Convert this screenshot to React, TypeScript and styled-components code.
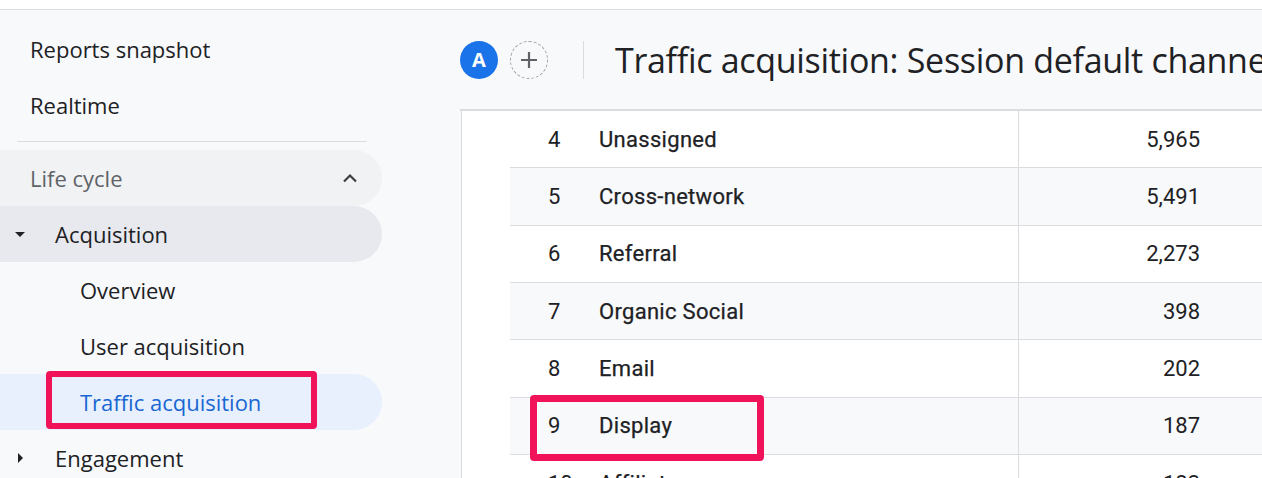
import styled, { createGlobalStyle } from 'styled-components'

const GlobalStyle = createGlobalStyle`
  html, body {
    margin: 0;
    padding: 0;
    background: #ffffff;
    overflow: hidden;
  }
  * {
    box-sizing: border-box;
  }
`

type NavItem = {
  label: string
  level: 0 | 1 | 2
  tone?: 'section' | 'open' | 'active'
  caret?: 'down' | 'right'
  chevron?: boolean
}

const navItems: NavItem[] = [
  { label: 'Life cycle', level: 0, tone: 'section', chevron: true },
  { label: 'Acquisition', level: 1, tone: 'open', caret: 'down' },
  { label: 'Overview', level: 2 },
  { label: 'User acquisition', level: 2 },
  { label: 'Traffic acquisition', level: 2, tone: 'active' },
  { label: 'Engagement', level: 1, caret: 'right' },
]

const rows = [
  { rank: 4, channel: 'Unassigned', value: '5,965' },
  { rank: 5, channel: 'Cross-network', value: '5,491' },
  { rank: 6, channel: 'Referral', value: '2,273' },
  { rank: 7, channel: 'Organic Social', value: '398' },
  { rank: 8, channel: 'Email', value: '202' },
  { rank: 9, channel: 'Display', value: '187', marked: true },
  { rank: 10, channel: 'Affiliates', value: '183' },
]

const App = () => {
  return (
    <Page>
      <GlobalStyle />
      <TopStrip />
      <Body>
        <Sidebar>
          <NavLink>Reports snapshot</NavLink>
          <NavLink>Realtime</NavLink>
          <Divider />
          {navItems.map((item) => (
            <NavRow key={item.label} $level={item.level} $tone={item.tone}>
              {item.caret && (
                <Caret>
                  <svg width="10" height="10" viewBox="0 0 10 10">
                    {item.caret === 'down' ? (
                      <path d="M0 3 L10 3 L5 8 Z" fill="#202124" />
                    ) : (
                      <path d="M3 0 L8 5 L3 10 Z" fill="#202124" />
                    )}
                  </svg>
                </Caret>
              )}
              <NavLabel $marked={item.tone === 'active'}>{item.label}</NavLabel>
              {item.chevron && (
                <Chevron>
                  <svg width="16" height="10" viewBox="0 0 16 10">
                    <path d="M2 8.5 L8 2.5 L14 8.5" fill="none" stroke="#3c4043" strokeWidth="2.2" />
                  </svg>
                </Chevron>
              )}
            </NavRow>
          ))}
        </Sidebar>
        <Main>
          <Header>
            <Avatar>A</Avatar>
            <AddButton>
              <svg width="18" height="18" viewBox="0 0 18 18">
                <path d="M9 1 V17 M1 9 H17" stroke="#5f6368" strokeWidth="2.2" />
              </svg>
            </AddButton>
            <HeaderDivider />
            <Title>Traffic acquisition: Session default channel group</Title>
          </Header>
          <Table>
            {rows.map((row, i) => (
              <Row key={row.rank} $striped={i % 2 === 1}>
                <RankCell>{row.rank}</RankCell>
                <ChannelCell>{row.channel}</ChannelCell>
                <ValueCell>{row.value}</ValueCell>
                {row.marked && <Marker />}
              </Row>
            ))}
          </Table>
        </Main>
      </Body>
    </Page>
  )
}

export default App

const Page = styled.div`
  width: 1262px;
  height: 478px;
  overflow: hidden;
  display: flex;
  flex-direction: column;
  background: #ffffff;
`

const TopStrip = styled.div`
  height: 10px;
  flex-shrink: 0;
  background: #ffffff;
  border-bottom: 1px solid #dcdde0;
`

const Body = styled.div`
  flex: 1;
  display: flex;
  min-height: 0;
`

const Sidebar = styled.nav`
  width: 462px;
  flex-shrink: 0;
  background: #f8f9fb;
  border-right: 1px solid #dadce0;
  padding-top: 11px;
  font-family: 'Open Sans', 'Noto Sans', sans-serif;
`

const NavLink = styled.div`
  height: 56px;
  display: flex;
  align-items: center;
  padding-left: 30px;
  font-size: 22px;
  color: #202124;
`

const Divider = styled.div`
  height: 1px;
  margin: 8px 94px 8px 17px;
  background: #dadce0;
`

const NavRow = styled.div<{ $level: 0 | 1 | 2; $tone?: 'section' | 'open' | 'active' }>`
  position: relative;
  width: 382px;
  height: 56px;
  display: flex;
  align-items: center;
  padding-left: ${(p) => (p.$level === 0 ? 30 : p.$level === 1 ? 55 : 80)}px;
  border-radius: 0 28px 28px 0;
  font-size: 22px;
  color: ${(p) => (p.$tone === 'section' ? '#5f6368' : p.$tone === 'active' ? '#1967d2' : '#202124')};
  background: ${(p) =>
    p.$tone === 'section' ? '#f1f2f4' : p.$tone === 'open' ? '#e8e9ee' : p.$tone === 'active' ? '#e8f0fe' : 'transparent'};
`

const Caret = styled.span`
  position: absolute;
  left: 15px;
  top: 50%;
  transform: translateY(-50%);
  display: flex;
`

const NavLabel = styled.span<{ $marked?: boolean }>`
  position: relative;
  &::after {
    content: '';
    display: ${(p) => (p.$marked ? 'block' : 'none')};
    position: absolute;
    left: -34px;
    right: -56px;
    top: -16px;
    bottom: -12px;
    border: 6px solid #f0135a;
    border-radius: 4px;
  }
`

const Chevron = styled.span`
  margin-left: auto;
  margin-right: 24px;
  display: flex;
`

const Main = styled.main`
  flex: 1;
  min-width: 0;
  display: flex;
  flex-direction: column;
  background: #ffffff;
`

const Header = styled.header`
  height: 101px;
  flex-shrink: 0;
  display: flex;
  align-items: center;
  margin-left: -2px;
  background: #f8f9fa;
  border-bottom: 2px solid #dadce0;
  white-space: nowrap;
  overflow: hidden;
`

const Avatar = styled.div`
  flex-shrink: 0;
  width: 38px;
  height: 38px;
  border-radius: 50%;
  background: #1a73e8;
  color: #ffffff;
  display: flex;
  align-items: center;
  justify-content: center;
  font-family: 'Open Sans', sans-serif;
  font-weight: 700;
  font-size: 20px;
`

const AddButton = styled.div`
  flex-shrink: 0;
  width: 38px;
  height: 38px;
  margin-left: 12px;
  border-radius: 50%;
  border: 1px dashed #9aa0a6;
  display: flex;
  align-items: center;
  justify-content: center;
`

const HeaderDivider = styled.div`
  flex-shrink: 0;
  width: 1px;
  height: 38px;
  margin: 0 31px 0 35px;
  background: #dadce0;
`

const Title = styled.h1`
  margin: 0;
  flex-shrink: 0;
  font-family: 'Open Sans', sans-serif;
  font-weight: 400;
  font-size: 34px;
  letter-spacing: -0.3px;
  color: #202124;
`

const Table = styled.div`
  padding-left: 48px;
  font-family: Roboto, 'Liberation Sans', sans-serif;
  font-size: 22px;
  color: #202124;
`

const Row = styled.div<{ $striped: boolean }>`
  position: relative;
  height: 57.33px;
  display: grid;
  grid-template-columns: 89px 419px 1fr;
  align-items: stretch;
  border-bottom: 1px solid #dadce0;
  background: ${(p) => (p.$striped ? '#f8f9fa' : '#ffffff')};
`

const RankCell = styled.div`
  display: flex;
  align-items: center;
  padding-left: 38px;
`

const ChannelCell = styled.div`
  display: flex;
  align-items: center;
  font-weight: 400;
  letter-spacing: 0.3px;
  -webkit-text-stroke: 0.25px #202124;
`

const ValueCell = styled.div`
  display: flex;
  align-items: center;
  justify-content: flex-end;
  padding-right: 62px;
  border-left: 1px solid #dadce0;
`

const Marker = styled.div`
  position: absolute;
  z-index: 1;
  left: 20px;
  width: 234px;
  top: -3px;
  bottom: -7px;
  border: 7px solid #f0135a;
  border-radius: 4px;
`
